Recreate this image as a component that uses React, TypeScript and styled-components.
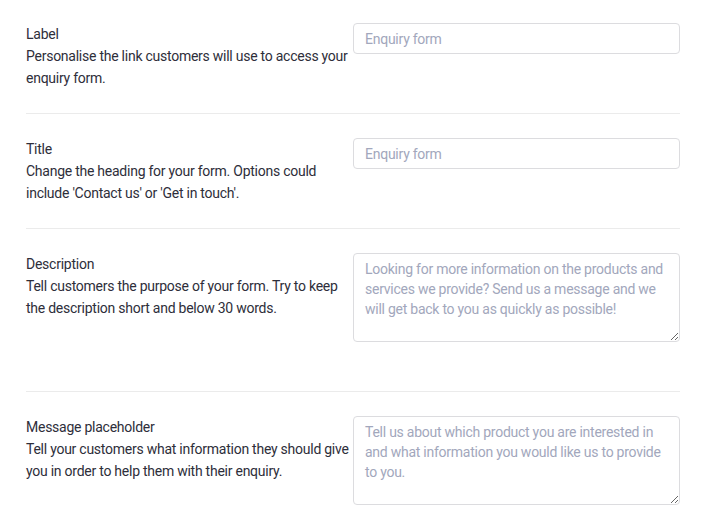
import React from 'react';
import styled, { createGlobalStyle } from 'styled-components';

const GlobalStyle = createGlobalStyle`
  body {
    margin: 0;
    background: #ffffff;
    font-family: Roboto, "Liberation Sans", sans-serif;
  }
`;

const Form = styled.div`
  width: 654px;
  margin-left: 26px;
`;

const Row = styled.div<{ $first?: boolean; $last?: boolean }>`
  display: grid;
  grid-template-columns: 327px 327px;
  padding: ${p => (p.$first ? '23px' : '24px')} 0 24px;
  border-bottom: ${p => (p.$last ? 'none' : '1px solid #ebebeb')};
`;

const Info = styled.div`
  font-size: 14px;
  line-height: 22px;
  letter-spacing: -0.25px;
  color: #2e2e3a;
`;

const Title = styled.div``;

const Help = styled.div``;

const Field = styled.div<{ $extra?: number }>`
  padding-bottom: ${p => p.$extra || 0}px;
`;

const TextInput = styled.input`
  box-sizing: border-box;
  display: block;
  width: 327px;
  height: 31px;
  padding: 0 11px;
  border: 1px solid #dcdcdf;
  border-radius: 4px;
  font-family: Roboto, "Liberation Sans", sans-serif;
  font-size: 14px;
  letter-spacing: -0.25px;
  color: #2e2e3a;
  outline: none;

  &::placeholder {
    color: #a2a7bc;
  }
`;

const TextArea = styled.textarea`
  box-sizing: border-box;
  display: block;
  width: 327px;
  height: 89px;
  padding: 5px 11px;
  border: 1px solid #dcdcdf;
  border-radius: 4px;
  font-family: Roboto, "Liberation Sans", sans-serif;
  font-size: 14px;
  line-height: 20px;
  letter-spacing: -0.25px;
  color: #2e2e3a;
  resize: vertical;
  outline: none;

  &::placeholder {
    color: #a2a7bc;
  }
`;

type Setting = {
  title: string;
  help: string;
  placeholder: string;
  multiline?: boolean;
};

const settings: Setting[] = [
  {
    title: 'Label',
    help: 'Personalise the link customers will use to access your enquiry form.',
    placeholder: 'Enquiry form',
  },
  {
    title: 'Title',
    help: "Change the heading for your form. Options could include 'Contact us' or 'Get in touch'.",
    placeholder: 'Enquiry form',
  },
  {
    title: 'Description',
    help: 'Tell customers the purpose of your form. Try to keep the description short and below 30 words.',
    placeholder:
      'Looking for more information on the products and services we provide? Send us a message and we will get back to you as quickly as possible!',
    multiline: true,
  },
  {
    title: 'Message placeholder',
    help: 'Tell your customers what information they should give you in order to help them with their enquiry.',
    placeholder:
      'Tell us about which product you are interested in and what information you would like us to provide to you.',
    multiline: true,
  },
];

export default function App() {
  return (
    <>
      <GlobalStyle />
      <Form>
        {settings.map((s, i) => (
          <Row key={s.title} $first={i === 0} $last={i === settings.length - 1}>
            <Info>
              <Title>{s.title}</Title>
              <Help>{s.help}</Help>
            </Info>
            <Field $extra={s.multiline ? 25 : 0}>
              {s.multiline ? (
                <TextArea placeholder={s.placeholder} />
              ) : (
                <TextInput type="text" placeholder={s.placeholder} />
              )}
            </Field>
          </Row>
        ))}
      </Form>
    </>
  );
}
